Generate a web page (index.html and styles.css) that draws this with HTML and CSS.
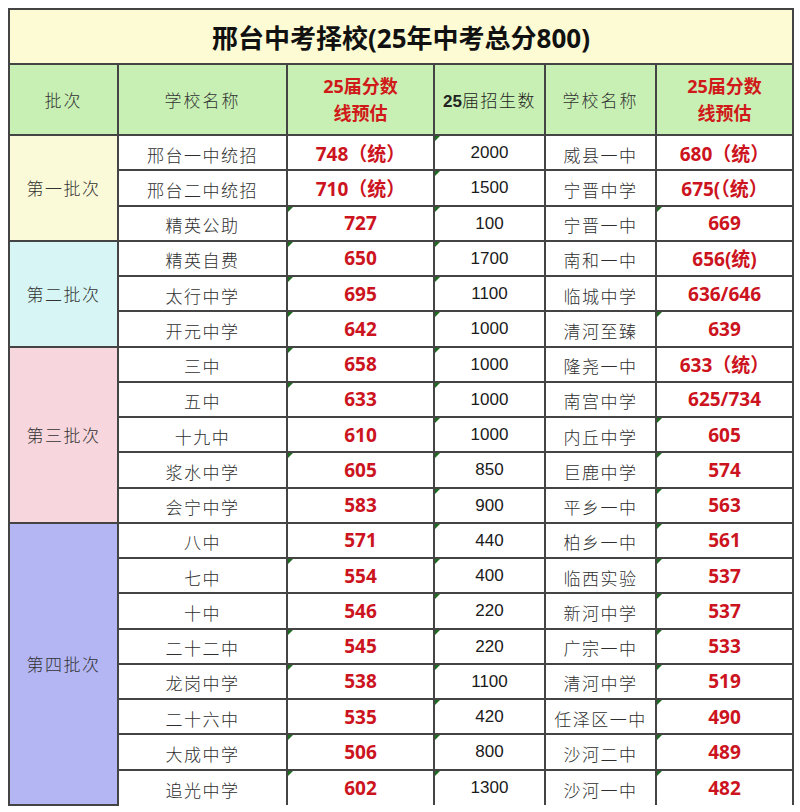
FILE: index.html
```html
<!DOCTYPE html>
<html lang="zh-CN">
<head>
<meta charset="utf-8">
<title>邢台中考择校</title>
<link rel="stylesheet" href="styles.css">
</head>
<body>
<table class="sheet">
  <colgroup>
    <col class="c1"><col class="c2"><col class="c3"><col class="c4"><col class="c5"><col class="c6">
  </colgroup>
  <tr class="title-row"><td colspan="6" class="title">邢台中考择校(25年中考总分800)</td></tr>
  <tr class="head-row">
    <td class="hd">批次</td>
    <td class="hd">学校名称</td>
    <td class="hd red-hd">25届分数<br>线预估</td>
    <td class="hd hd-num"><b>25</b>届招生数</td>
    <td class="hd">学校名称</td>
    <td class="hd red-hd">25届分数<br>线预估</td>
  </tr>

  <tr><td rowspan="3" class="batch b1">第一批次</td><td class="nm">邢台一中统招</td><td class="sc">748（统）</td><td class="num t">2000</td><td class="nm">威县一中</td><td class="sc">680（统）</td></tr>
  <tr><td class="nm">邢台二中统招</td><td class="sc">710（统）</td><td class="num t">1500</td><td class="nm">宁晋中学</td><td class="sc">675(（统）</td></tr>
  <tr><td class="nm">精英公助</td><td class="sc t">727</td><td class="num t">100</td><td class="nm">宁晋一中</td><td class="sc t">669</td></tr>

  <tr><td rowspan="3" class="batch b2">第二批次</td><td class="nm">精英自费</td><td class="sc t">650</td><td class="num t">1700</td><td class="nm">南和一中</td><td class="sc">656(统)</td></tr>
  <tr><td class="nm">太行中学</td><td class="sc t">695</td><td class="num t">1100</td><td class="nm">临城中学</td><td class="sc">636/646</td></tr>
  <tr><td class="nm">开元中学</td><td class="sc t">642</td><td class="num t">1000</td><td class="nm">清河至臻</td><td class="sc t">639</td></tr>

  <tr><td rowspan="5" class="batch b3">第三批次</td><td class="nm">三中</td><td class="sc t">658</td><td class="num t">1000</td><td class="nm">隆尧一中</td><td class="sc">633（统）</td></tr>
  <tr><td class="nm">五中</td><td class="sc t">633</td><td class="num t">1000</td><td class="nm">南宫中学</td><td class="sc">625/734</td></tr>
  <tr><td class="nm">十九中</td><td class="sc">610</td><td class="num t">1000</td><td class="nm">内丘中学</td><td class="sc t">605</td></tr>
  <tr><td class="nm">浆水中学</td><td class="sc t">605</td><td class="num t">850</td><td class="nm">巨鹿中学</td><td class="sc t">574</td></tr>
  <tr><td class="nm">会宁中学</td><td class="sc">583</td><td class="num t">900</td><td class="nm">平乡一中</td><td class="sc t">563</td></tr>

  <tr><td rowspan="8" class="batch b4">第四批次</td><td class="nm">八中</td><td class="sc">571</td><td class="num t">440</td><td class="nm">柏乡一中</td><td class="sc t">561</td></tr>
  <tr><td class="nm">七中</td><td class="sc t">554</td><td class="num t">400</td><td class="nm">临西实验</td><td class="sc t">537</td></tr>
  <tr><td class="nm">十中</td><td class="sc">546</td><td class="num t">220</td><td class="nm">新河中学</td><td class="sc t">537</td></tr>
  <tr><td class="nm">二十二中</td><td class="sc t">545</td><td class="num t">220</td><td class="nm">广宗一中</td><td class="sc t">533</td></tr>
  <tr><td class="nm">龙岗中学</td><td class="sc t">538</td><td class="num t">1100</td><td class="nm">清河中学</td><td class="sc t">519</td></tr>
  <tr><td class="nm">二十六中</td><td class="sc">535</td><td class="num t">420</td><td class="nm">任泽区一中</td><td class="sc t">490</td></tr>
  <tr><td class="nm">大成中学</td><td class="sc t">506</td><td class="num t">800</td><td class="nm">沙河二中</td><td class="sc t">489</td></tr>
  <tr class="last"><td class="nm">追光中学</td><td class="sc t">602</td><td class="num t">1300</td><td class="nm">沙河一中</td><td class="sc t">482</td></tr>
</table>
</body>
</html>
```
FILE: styles.css
```css
html, body {
  margin: 0;
  background: #ffffff;
}
body {
  padding: 8px;
  font-family: "Noto Sans CJK SC", sans-serif;
  color: #333;
}
.sheet {
  width: 784px;
  border-collapse: collapse;
  table-layout: fixed;
}
.c1 { width: 109px; }
.c2 { width: 169px; }
.c3 { width: 147px; }
.c4 { width: 111px; }
.c5 { width: 111px; }
.c6 { width: 137px; }

.sheet td {
  border: 2px solid #444;
  text-align: center;
  vertical-align: middle;
  padding: 0;
  position: relative;
  background: #fff;
}
.sheet tr { height: 35.26px; }
.title-row { height: 55px !important; }
.head-row { height: 71px !important; }

.title {
  background: #fdfbd3 !important;
  font-family: "Open Sans", "Noto Sans CJK SC", sans-serif;
  font-weight: 700;
  font-size: 26px;
  color: #111;
  letter-spacing: 0;
}
.hd {
  background: #c8f0b4 !important;
  font-size: 17px;
  font-weight: 300;
  letter-spacing: 2px;
  color: #333;
}
.red-hd {
  color: #d01a1a;
  font-weight: 700;
  font-size: 18px;
  line-height: 27px;
  letter-spacing: 0;
  font-family: "Open Sans", "Noto Sans CJK SC", sans-serif;
}
.hd-num {
  color: #222;
  letter-spacing: 1.5px;
}
.hd-num b {
  font-family: "Liberation Sans", sans-serif;
  font-weight: 700;
  letter-spacing: 0;
}

.batch {
  font-size: 17px;
  font-weight: 300;
  letter-spacing: 1.5px;
  color: #333;
}
.b1 { background: #fbfad8 !important; }
.b2 { background: #d6f5f4 !important; }
.b3 { background: #f7d7dd !important; }
.b4 { background: #b3b6f3 !important; }

.nm {
  font-size: 17px;
  font-weight: 300;
  letter-spacing: 1.5px;
  color: #2e2e2e;
  padding-top: 3px !important;
}
.num {
  font-family: "Liberation Sans", sans-serif;
  font-size: 17px;
  color: #1a1a1a;
  padding-top: 1px !important;
}
.sc {
  font-family: "Open Sans", "Noto Sans CJK SC", sans-serif;
  font-weight: 700;
  font-size: 19px;
  color: #cc1320;
}

.t::before {
  content: "";
  position: absolute;
  left: 0;
  top: 0;
  width: 0;
  height: 0;
  border-top: 5px solid #1f6b22;
  border-right: 5px solid transparent;
}

.last td {
  border-bottom: none;
}
```
